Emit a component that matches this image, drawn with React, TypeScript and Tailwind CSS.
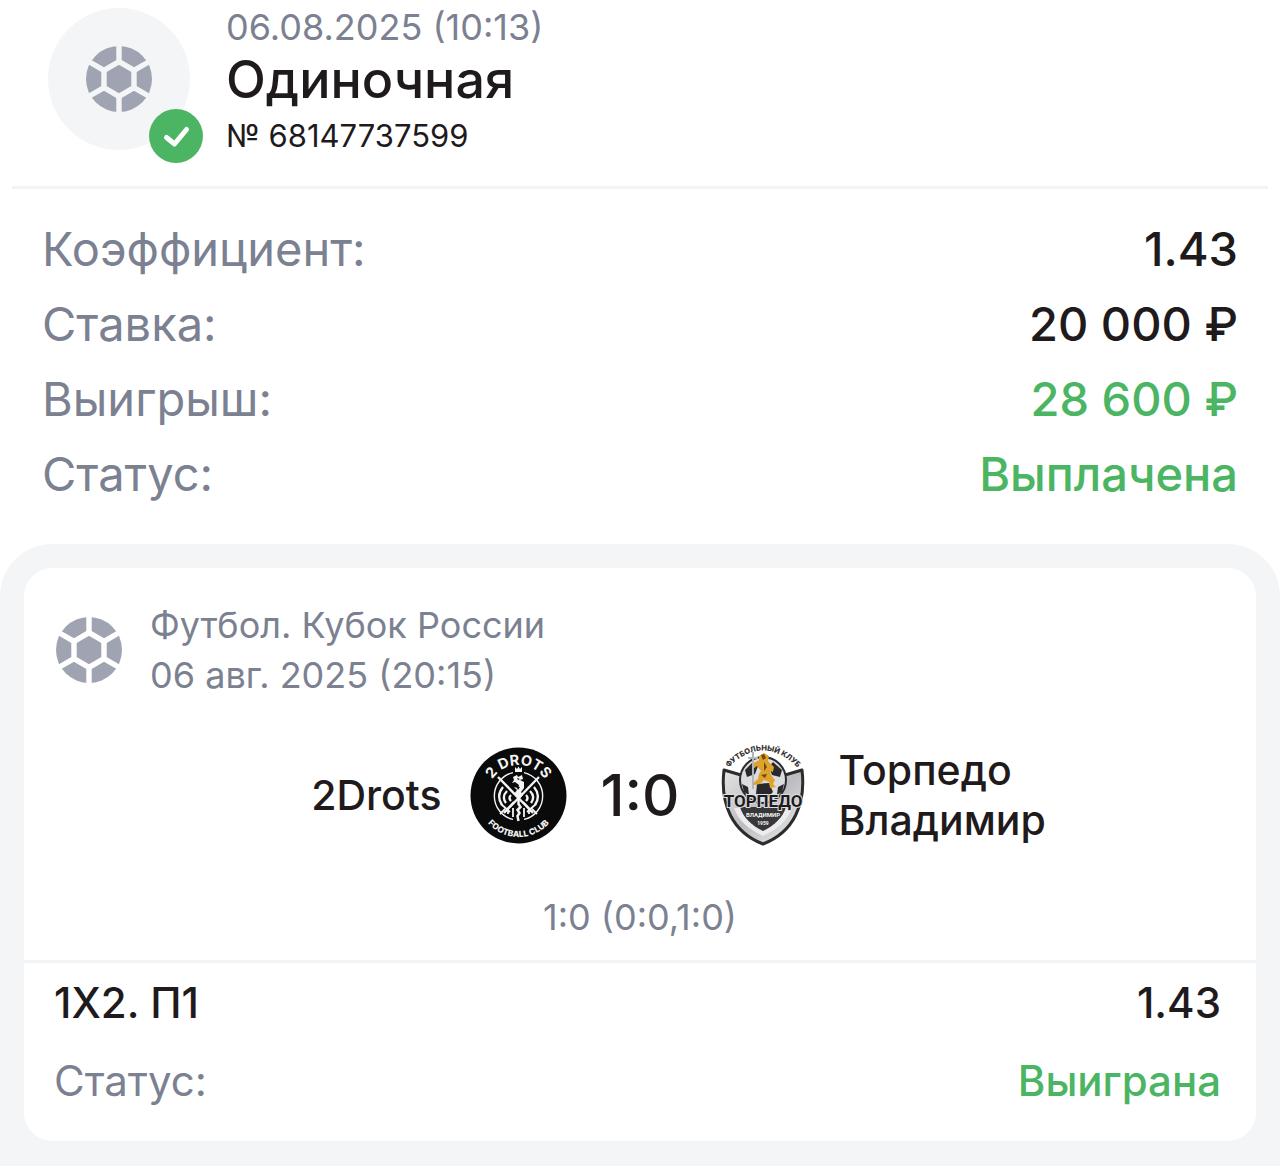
import { useId } from 'react';

interface DetailRow {
    label: string;
    value: string;
    won?: boolean;
}

const details: DetailRow[] = [
    { label: 'Коэффициент:', value: '1.43' },
    { label: 'Ставка:', value: '20 000 ₽' },
    { label: 'Выигрыш:', value: '28 600 ₽', won: true },
    { label: 'Статус:', value: 'Выплачена', won: true },
];

function BallIcon() {
    const maskId = useId();

    return (
        <svg viewBox="0 0 66 66" className="size-[66px] shrink-0" aria-hidden="true">
            <mask id={maskId}>
                <rect width="66" height="66" fill="#fff" />
                <g stroke="#000" strokeWidth="5.4" fill="none">
                    <path d="M33 15.7 48 24.35v17.3L33 50.3 18 41.65v-17.3Z" strokeLinejoin="round" />
                    <path d="M33 16V-2M33 50v18M48 24.35 66 14M48 41.65 66 52M18 24.35 0 14M18 41.65 0 52" />
                </g>
            </mask>
            <circle cx="33" cy="33" r="33" fill="#a0a3b1" mask={`url(#${maskId})`} />
        </svg>
    );
}

function DrotsLogo() {
    return (
        <svg viewBox="0 0 97 97" className="size-[97px]" role="img" aria-label="2Drots">
            <defs>
                <path id="drots-top" d="M17.5 49a31 31 0 0 1 62 0" />
                <path id="drots-bottom" d="M7 48.5a41.5 41.5 0 0 0 83 0" />
            </defs>
            <circle cx="48.5" cy="48.5" r="48" fill="#0a0a0a" />
            <g fill="#f4f4f4" fontFamily="Inter, sans-serif" textAnchor="middle">
                <text fontSize="14.5" fontWeight="700">
                    <textPath href="#drots-top" startOffset="50%">2 DROTS</textPath>
                </text>
                <text fontSize="8.4" fontWeight="800">
                    <textPath href="#drots-bottom" startOffset="50%">FOOTBALL CLUB</textPath>
                </text>
            </g>
            <g fill="none" stroke="#f4f4f4">
                <path d="M43 25.6A24 24 0 0 0 43 72.4M54 25.6A24 24 0 0 1 54 72.4" strokeWidth="1.4" />
                <path d="M28 30 63 66M69 30 34 66" strokeWidth="2.4" />
                <path d="M31 57 40 65M57 65 66 57M35 62 30 67M62 62 67 67" strokeWidth="1.8" />
                <path d="M33 40c-5 6-5 12-1 18M37 44c-4 4-4 8-1 12M41 48c-2 2-2 4 0 6" strokeWidth="2.3" />
                <path d="M64 40c5 6 5 12 1 18M60 44c4 4 4 8 1 12M56 48c2 2 2 4 0 6" strokeWidth="2.3" />
                <path d="M38 67v-6l6-6M43 70v-9M59 67v-6l-6-6M54 70v-9" strokeWidth="1.8" />
                <path d="M48.5 52v5l2 3-3 3 2 3-2 3 1 5" strokeWidth="2.5" />
            </g>
            <path d="m45 20 2 2 1.5-2.5L50 22l2-2v5h-7Z" fill="#f4f4f4" />
            <path d="m43 30 4-2 1 2 4-2 1 4-3 1 4 2v6l-3 4 2 3-4 5-5-6 3-4-3-3 4 1 1-3-4-3-3 1 2-3Z" fill="#f4f4f4" />
            <path d="m46 39 4 1-2 3ZM47 31l3 1-2 1Z" fill="#0a0a0a" />
        </svg>
    );
}

function TorpedoLogo() {
    return (
        <svg viewBox="0 0 97 106" className="h-[106px] w-[97px]" role="img" aria-label="Торпедо Владимир">
            <defs>
                <path id="torpedo-top" d="M13 27Q49-10 85 27" />
                <linearGradient id="torpedo-silver" x1="0" y1="0" x2="1" y2="1">
                    <stop offset="0" stopColor="#e4e4e4" />
                    <stop offset="0.5" stopColor="#bcbcc0" />
                    <stop offset="1" stopColor="#f0f0f0" />
                </linearGradient>
            </defs>
            <text fontSize="7.5" fontWeight="800" fill="#333" fontFamily="Inter, sans-serif" textAnchor="middle">
                <textPath href="#torpedo-top" startOffset="50%">ФУТБОЛЬНЫЙ КЛУБ</textPath>
            </text>
            {/* shield with a lighter inner rim */}
            <path
                d="M10 28 27 33h44l17-5C92 62 80 90 49 102 18 90 6 62 10 28Z"
                fill="url(#torpedo-silver)"
                stroke="#2c2c2e"
                strokeWidth="3"
                strokeLinejoin="round"
            />
            <path d="M20 66h58c-4 12-14 21-29 28-15-7-25-16-29-28Z" fill="#ececee" />
            <path d="M26 65h46c-3 10-11 18-23 24-12-6-20-14-23-24Z" fill="#38383b" />
            <circle cx="49" cy="38" r="24" fill="#2a2a2d" />
            <circle cx="49" cy="38" r="22" fill="#dcdcde" />
            <path
                d="m31 28 8-8 5 4-3 8-8 3ZM68 28l-9-8-4 5 3 8 8 2ZM43 42l12-1 4 9-7 7-10-5ZM28 42l6 3 1 8-5-3ZM70 42l-6 3-1 8 5-3Z"
                fill="#29292c"
            />
            <path
                d="m45 14 5-3 5 3-1 5 6 6-1 5-3-1 1 4 4 5-2 4 3 3-6 1-1-6-5-2-4 4-6 1-1-2 5-4 1-5 2-3-4-5-4 3 1-6 5-3Z"
                fill="#dfa32c"
            />
            <path d="m47 13 3-1 2 4-3 2ZM50 20l3 5-3 4ZM47 33l6-1-2 4Z" fill="#6d4a16" />
            <path d="M39 10v37M34 16h10" stroke="#b4b4b8" strokeWidth="2" />
            <text
                x="49"
                y="65"
                fontSize="17"
                fontFamily="Roboto, sans-serif"
                fontWeight="700"
                textAnchor="middle"
                fill="#1c1c1f"
                stroke="#dcdcdf"
                strokeWidth="2"
                paintOrder="stroke"
            >
                ТОРПЕДО
            </text>
            <g fill="#f5f5f5" fontFamily="Roboto, sans-serif" fontWeight="700" textAnchor="middle">
                <text x="49" y="75" fontSize="6">ВЛАДИМИР</text>
                <text x="49" y="83" fontSize="5">1959</text>
            </g>
        </svg>
    );
}

export default function App() {
    return (
        <main className="flex min-h-screen flex-col bg-white font-[Inter,sans-serif] text-[#1f1a1c]">
            <header className="mx-3 flex h-[189px] gap-9 border-b-3 border-[#f2f3f5] pt-2 pl-9">
                <div className="relative flex size-[142px] shrink-0 items-center justify-center rounded-full bg-[#f4f5f7]">
                    <BallIcon />
                    <span className="absolute top-[101px] left-[101px] flex size-[54px] items-center justify-center rounded-full bg-[#4bb563]">
                        <svg viewBox="0 0 54 54" className="size-[54px]" role="img" aria-label="Выиграна">
                            <path
                                d="m17.5 28.500 8 6.500 12-14.500"
                                fill="none"
                                stroke="#fff"
                                strokeWidth="5"
                                strokeLinecap="round"
                                strokeLinejoin="round"
                            />
                        </svg>
                    </span>
                </div>
                <div className="whitespace-nowrap">
                    <p className="text-[36px] leading-[38px] text-[#7b8191]">06.08.2025 (10:13)</p>
                    <h1 className="text-[52px] leading-[68px] font-medium">Одиночная</h1>
                    <p className="text-[31px] leading-[44px]">№ 68147737599</p>
                </div>
            </header>

            <dl className="px-[42px] pt-[22px] pb-[33px] text-[47px] leading-[75px]">
                {details.map((row) => (
                    <div key={row.label} className="flex justify-between gap-4">
                        <dt className="text-[#7b8191]">{row.label}</dt>
                        <dd className={row.won ? 'font-medium text-[#4bb563]' : 'font-medium'}>{row.value}</dd>
                    </div>
                ))}
            </dl>

            <section className="grow rounded-t-[52px] bg-[#f4f5f7] p-6">
                <article className="rounded-[28px] bg-white">
                    <div className="flex items-center gap-7 px-8 pt-8">
                        <BallIcon />
                        <p className="text-[36px] leading-[50px] text-[#7b8191]">
                            Футбол. Кубок России
                            <br />
                            06 авг. 2025 (20:15)
                        </p>
                    </div>

                    <div className="mt-[42px] grid grid-cols-[1fr_auto_1fr] items-center gap-7 text-[41px] leading-[50px] font-medium">
                        <p className="text-right">2Drots</p>
                        <div className="flex items-center">
                            <DrotsLogo />
                            <strong className="w-[147px] text-center text-[58px] font-medium">1:0</strong>
                            <TorpedoLogo />
                        </div>
                        <p>
                            Торпедо
                            <br />
                            Владимир
                        </p>
                    </div>

                    <p className="mt-11 border-b-3 border-[#f2f3f5] pb-[18px] text-center text-[36px] leading-[50px] text-[#7b8191]">
                        1:0 (0:0,1:0)
                    </p>

                    <div className="pt-px pr-[35px] pb-[21px] pl-[30px] text-[42px] leading-[78px]">
                        <div className="flex justify-between font-medium">
                            <span>1X2. П1</span>
                            <span>1.43</span>
                        </div>
                        <div className="flex justify-between">
                            <span className="text-[#7b8191]">Статус:</span>
                            <span className="font-medium text-[#4bb563]">Выиграна</span>
                        </div>
                    </div>
                </article>
            </section>
        </main>
    );
}
